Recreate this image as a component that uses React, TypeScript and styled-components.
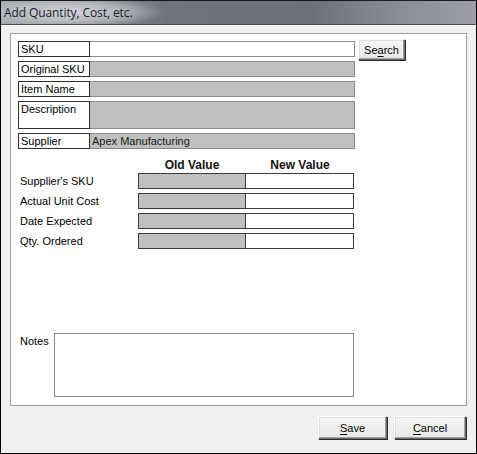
import React from 'react';
import styled, { createGlobalStyle } from 'styled-components';

const GlobalStyle = createGlobalStyle`
  html, body {
    margin: 0;
    padding: 0;
    background: #ffffff;
  }
  * {
    box-sizing: border-box;
  }
`;

type LabeledFieldProps = {
  label: string;
  value?: string;
  editable?: boolean;
  tall?: boolean;
};

function LabeledField({ label, value, editable, tall }: LabeledFieldProps) {
  return (
    <StyledFieldRow $tall={tall}>
      <StyledFieldLabel>{label}</StyledFieldLabel>
      <StyledFieldValue $editable={editable}>{value}</StyledFieldValue>
    </StyledFieldRow>
  );
}

const compareRows = ["Supplier's SKU", 'Actual Unit Cost', 'Date Expected', 'Qty. Ordered'];

function App() {
  return (
    <>
      <GlobalStyle />
      <StyledWindow>
        <StyledTitleBar>
          <StyledTitle>Add Quantity, Cost, etc.</StyledTitle>
        </StyledTitleBar>
        <StyledClient>
          <StyledPanel>
            <StyledTopArea>
              <StyledFieldList>
                <LabeledField label="SKU" editable />
                <LabeledField label="Original SKU" />
                <LabeledField label="Item Name" />
                <LabeledField label="Description" tall />
                <LabeledField label="Supplier" value="Apex Manufacturing" />
              </StyledFieldList>
              <StyledSearchButton $width={47} $height={21}>
                Se<u>a</u>rch
              </StyledSearchButton>
            </StyledTopArea>

            <StyledCompareGrid>
              <span />
              <StyledColumnHead>Old Value</StyledColumnHead>
              <StyledColumnHead>New Value</StyledColumnHead>
              {compareRows.map((row) => (
                <React.Fragment key={row}>
                  <StyledRowLabel>{row}</StyledRowLabel>
                  <StyledOldBox />
                  <StyledNewBox />
                </React.Fragment>
              ))}
            </StyledCompareGrid>

            <StyledNotesRow>
              <StyledRowLabel>Notes</StyledRowLabel>
              <StyledNotesBox />
            </StyledNotesRow>
          </StyledPanel>

          <StyledFooter>
            <StyledButton $width={69} $height={23}>
              <u>S</u>ave
            </StyledButton>
            <StyledButton $width={72} $height={23}>
              <u>C</u>ancel
            </StyledButton>
          </StyledFooter>
        </StyledClient>
      </StyledWindow>
    </>
  );
}

const StyledWindow = styled.div`
  width: 477px;
  height: 454px;
  display: flex;
  flex-direction: column;
  border: 1px solid #000000;
  border-top: none;
  background: #f0f0f0;
  font-family: 'Liberation Sans', Arial, sans-serif;
  font-size: 11px;
  color: #000000;
`;

const StyledTitleBar = styled.div`
  height: 25px;
  flex: none;
  display: flex;
  align-items: center;
  padding-left: 3px;
  border-top: 1px solid #1a1a1a;
  border-bottom: 1px solid #4a4c50;
  background:
    radial-gradient(ellipse 95px 16px at 68px 11px, rgba(215, 216, 220, 0.95) 0%, rgba(200, 202, 206, 0.7) 55%, rgba(200, 202, 206, 0) 100%),
    linear-gradient(90deg, #a4a7ae 0%, #6f737a 35%, #6c7077 65%, #8c8f97 85%, #9c9ea6 100%);
`;

const StyledTitle = styled.div`
  font-family: 'Open Sans', 'Liberation Sans', sans-serif;
  font-size: 12px;
  letter-spacing: -0.1px;
  color: #1c1c28;
  margin-top: -1px;
`;

const StyledClient = styled.div`
  flex: 1;
  display: flex;
  flex-direction: column;
  padding: 7px 9px 0 9px;
  border-top: 1px solid #fafafa;
`;

const StyledPanel = styled.div`
  height: 373px;
  display: flex;
  flex-direction: column;
  padding: 7px 0 0 7px;
  background: #ffffff;
  border: 1px solid #a0a0a0;
`;

const StyledTopArea = styled.div`
  display: flex;
  align-items: flex-start;
  gap: 3px;
`;

const StyledFieldList = styled.div`
  display: flex;
  flex-direction: column;
  gap: 4px;
`;

const StyledFieldRow = styled.div<{ $tall?: boolean }>`
  display: flex;
  height: ${({ $tall }) => ($tall ? '28px' : '16px')};
`;

const StyledFieldLabel = styled.div`
  width: 72px;
  border: 1px solid #303030;
  padding: 1px 0 0 2px;
  line-height: 12px;
  white-space: nowrap;
`;

const StyledFieldValue = styled.div<{ $editable?: boolean }>`
  width: 265px;
  border: 1px solid #8a8a8a;
  border-left: none;
  padding: 1px 0 0 2px;
  line-height: 12px;
  background: ${({ $editable }) => ($editable ? '#ffffff' : '#c0c0c0')};
  color: #1a1a1a;
`;

const StyledButton = styled.button<{ $width: number; $height: number }>`
  width: ${({ $width }) => $width}px;
  height: ${({ $height }) => $height}px;
  padding: 0;
  margin: 0;
  font-family: 'Liberation Sans', Arial, sans-serif;
  font-size: 11px;
  color: #000000;
  background: linear-gradient(#f6f6f6, #e8e8e8);
  border: 1px solid;
  border-color: #ffffff #6a6a6a #6a6a6a #ffffff;
  box-shadow: 1px 1px 0 #2a2a2a, inset -1px -1px 0 #a0a0a0, inset 1px 1px 0 #e0e0e0;
  cursor: pointer;
  flex: none;

  u {
    text-decoration-thickness: 1px;
    text-underline-offset: 2px;
  }
`;

const StyledSearchButton = styled(StyledButton)`
  margin-top: -2px;
`;

const StyledCompareGrid = styled.div`
  display: grid;
  grid-template-columns: 120px 108px 108px;
  grid-auto-rows: 16px;
  row-gap: 4px;
  margin-top: 4px;
`;

const StyledColumnHead = styled.div`
  align-self: end;
  font-weight: bold;
  font-size: 12px;
  text-align: center;
  line-height: 14px;
  margin-bottom: -3px;
  color: #101010;
`;

const StyledRowLabel = styled.div`
  padding: 2px 0 0 2px;
  line-height: 12px;
  white-space: nowrap;
`;

const StyledOldBox = styled.div`
  background: #c0c0c0;
  border: 1px solid #3c3c3c;
`;

const StyledNewBox = styled.div`
  background: #ffffff;
  border: 1px solid #3c3c3c;
  border-left: none;
`;

const StyledNotesRow = styled.div`
  display: flex;
  margin-top: 84px;
  height: 64px;
`;

const StyledNotesBox = styled.div`
  width: 300px;
  border: 1px solid #8a8a8a;
  background: #ffffff;
  margin-left: auto;
  margin-right: 112px;
`;

const StyledFooter = styled.div`
  display: flex;
  justify-content: flex-end;
  gap: 7px;
  padding: 10px 1px 0 0;
`;

export default App;
